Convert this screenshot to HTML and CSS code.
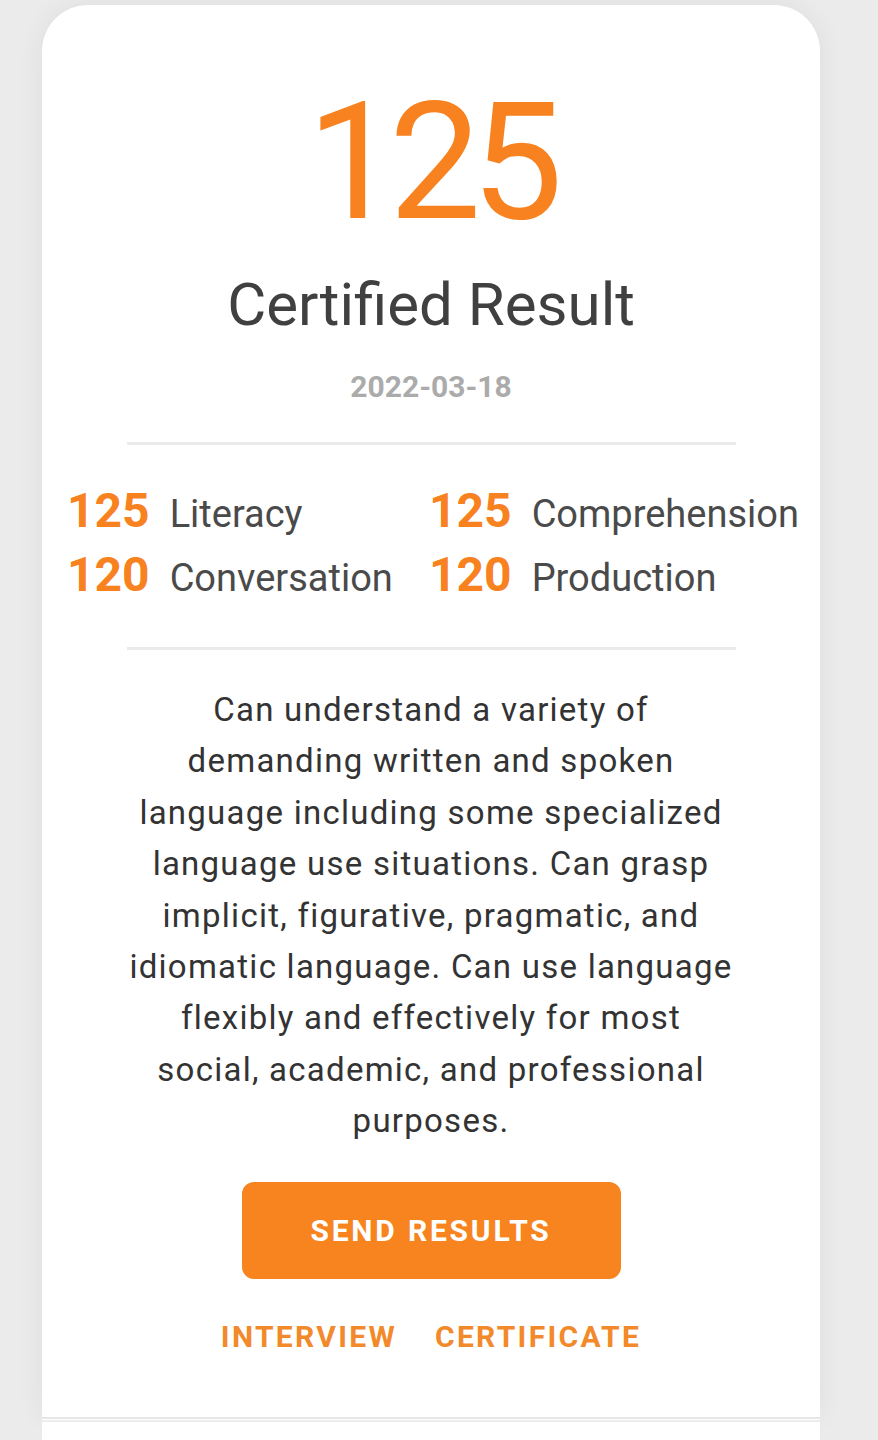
FILE: index.html
```html
<!DOCTYPE html>
<html lang="en">
<head>
<meta charset="utf-8">
<title>Certified Result</title>
<link rel="stylesheet" href="styles.css">
</head>
<body>
<main class="card">
  <div class="score">125</div>
  <h1 class="title">Certified Result</h1>
  <div class="date">2022-03-18</div>
  <hr class="rule">
  <div class="subscores">
    <div class="sub"><span class="num">125</span><span class="label">Literacy</span></div>
    <div class="sub"><span class="num">125</span><span class="label">Comprehension</span></div>
    <div class="sub"><span class="num">120</span><span class="label">Conversation</span></div>
    <div class="sub"><span class="num">120</span><span class="label">Production</span></div>
  </div>
  <hr class="rule">
  <p class="desc">Can understand a variety of demanding written and spoken language including some specialized language use situations. Can grasp implicit, figurative, pragmatic, and idiomatic language. Can use language flexibly and effectively for most social, academic, and professional purposes.</p>
  <button class="send">SEND RESULTS</button>
  <div class="links">
    <a class="link">INTERVIEW</a>
    <a class="link">CERTIFICATE</a>
  </div>
</main>
<div class="sep"></div>
<div class="card2"></div>
</body>
</html>
```
FILE: styles.css
```css
html, body {
  margin: 0;
  padding: 0;
}
body {
  background: #ebebeb;
  font-family: Roboto, "Noto Sans", sans-serif;
  color: #444;
  overflow: hidden;
}
.card {
  margin: 5px 0 0 42px;
  width: 778px;
  height: 1412px;
  box-sizing: border-box;
  background: #fff;
  border-radius: 46px 46px 0 0;
  box-shadow: 0 0 28px rgba(0, 0, 0, 0.06);
  display: flex;
  flex-direction: column;
  align-items: center;
  padding-top: 77px;
}
.score {
  font-size: 164px;
  line-height: 160px;
  font-weight: 400;
  color: #f7821f;
  letter-spacing: -10px;
  margin-right: 2px;
}
.title {
  margin: 33px 0 0;
  font-size: 60px;
  line-height: 60px;
  font-weight: 400;
  color: #404040;
}
.date {
  margin-top: 37px;
  font-size: 30px;
  line-height: 30px;
  font-weight: 700;
  color: #ababab;
}
.rule {
  align-self: stretch;
  margin: 40px 84px 0 85px;
  border: 0;
  height: 3px;
  background: #ebebeb;
}
.subscores {
  align-self: stretch;
  display: grid;
  grid-template-columns: 362px auto;
  padding: 42px 0 8px 25px;
  row-gap: 16px;
}
.sub {
  display: flex;
  align-items: baseline;
  gap: 20px;
  height: 48px;
}
.num {
  font-size: 48px;
  line-height: 48px;
  font-weight: 700;
  color: #f7821f;
}
.label {
  font-size: 38px;
  line-height: 48px;
  color: #4a4a4a;
}
.desc {
  margin: 34px 0 0;
  width: 605px;
  text-align: center;
  font-size: 33px;
  line-height: 51.4px;
  letter-spacing: 1.25px;
  color: #333;
}
.send {
  margin-top: 35px;
  width: 379px;
  height: 97px;
  border: 0;
  border-radius: 12px;
  background: #f7841f;
  color: #fff;
  font-family: inherit;
  font-size: 30px;
  font-weight: 700;
  letter-spacing: 2.8px;
}
.links {
  margin-top: 43px;
  display: flex;
  gap: 38px;
}
.link {
  font-size: 30px;
  line-height: 30px;
  font-weight: 700;
  letter-spacing: 2.3px;
  color: #f28a2c;
}
.sep {
  width: 778px;
  height: 5px;
  margin-left: 42px;
  background: linear-gradient(#e6e6e6 0 2px, #fff 2px 3px, #ededed 3px);
}
.card2 {
  width: 778px;
  margin-left: 42px;
  height: 40px;
  background: #fff;
}
```
